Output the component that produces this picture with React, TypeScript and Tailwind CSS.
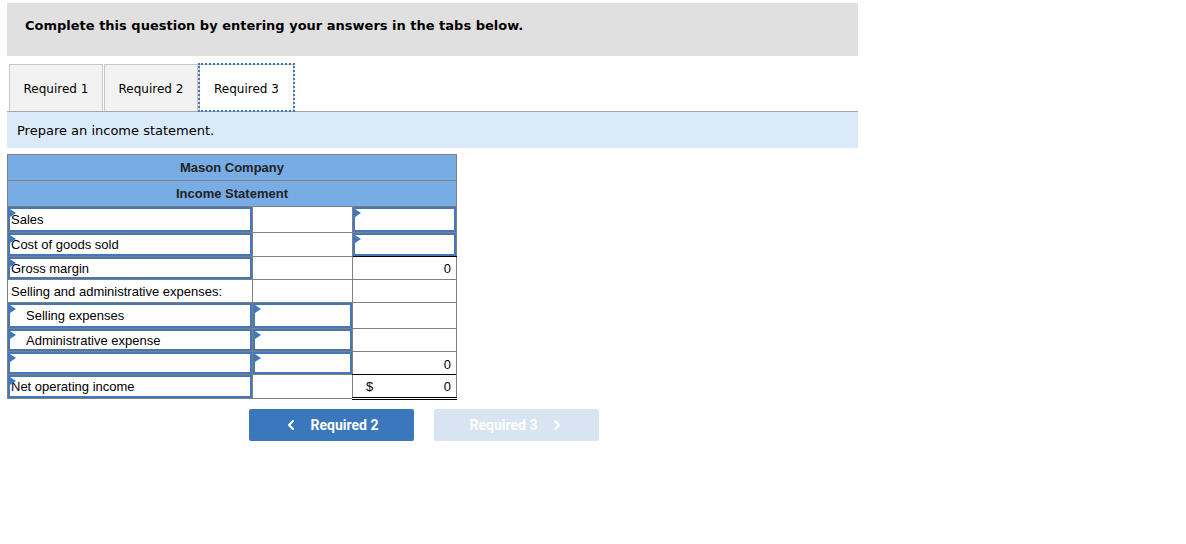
import { ChevronLeft, ChevronRight } from "lucide-react";

const verdana = { fontFamily: '"DejaVu Sans", Verdana, sans-serif' };

function Marker() {
  return (
    <span className="absolute left-0 top-0 h-0 w-0 border-y-[4px] border-l-[6px] border-y-transparent border-l-[#3d78c0]" />
  );
}

function Input({ text = "", indent = false }: { text?: string; indent?: boolean }) {
  return (
    <div className="relative h-full border-2 border-[#4478b8] bg-white flex items-center">
      <Marker />
      <span className={indent ? "pl-[16px]" : "pl-[1px]"}>{text}</span>
    </div>
  );
}

export default function App() {
  const tabs = ["Required 1", "Required 2", "Required 3"];

  return (
    <div className="w-[1186px] h-[544px] bg-white pt-[3px] pl-[7px]">
      {/* instructions */}
      <div className="w-[851px] h-[53px] bg-[#e0e0e0] pt-[10px] pl-[18px]" style={verdana}>
        <span className="text-[13px] font-bold text-black">Complete this question by entering your answers in the tabs below.</span>
      </div>

      {/* tabs */}
      <div className="mt-[8px] w-[851px] flex items-end border-b border-[#a6a6a6] pl-[2px] h-[48px]" style={verdana}>
        {tabs.map((t, i) =>
          i === 2 ? (
            <div key={t} className="outline-2 outline-dotted outline-[#3d78c0] -outline-offset-1 h-[47px] w-[95px] border border-b-0 border-[#c8c8c8] bg-white flex items-center justify-center pt-[2px] text-[12px] text-black">
              {t}
            </div>
          ) : (
            <div key={t} className="mr-[1px] h-[47px] w-[94px] border border-b-0 border-[#c8c8c8] bg-[#f2f2f2] flex items-center justify-center pt-[2px] text-[12px] text-black">
              {t}
            </div>
          )
        )}
      </div>
      <div className="w-[851px] h-[36px] bg-[#dbeaf8] flex items-center pl-[10px] pt-[2px] text-[13px] text-black" style={verdana}>
        Prepare an income statement.
      </div>

      {/* statement */}
      <table
        className="mt-[6px] table-fixed border-collapse border border-[#808080] text-[13px] leading-[15px] text-black"
        style={{ fontFamily: '"Liberation Sans", Arial, sans-serif' }}
      >
        <colgroup>
          <col className="w-[245px]" />
          <col className="w-[100px]" />
          <col className="w-[104px]" />
        </colgroup>
        <tbody>
          <tr className="h-[26px] bg-[#78ace4]">
            <td colSpan={3} className="border border-[#808080] text-center font-bold text-[13px] text-[#222]">Mason Company</td>
          </tr>
          <tr className="h-[26px] bg-[#78ace4]">
            <td colSpan={3} className="border border-[#808080] text-center font-bold text-[13px] text-[#222]">Income Statement</td>
          </tr>
          <tr className="h-[26px]">
            <td className="border border-[#808080] p-0 h-[26px]"><Input text="Sales" /></td>
            <td className="border border-[#808080] p-0" />
            <td className="border border-[#808080] p-0 h-[26px]"><Input /></td>
          </tr>
          <tr className="h-[24px]">
            <td className="border border-[#808080] p-0 h-[24px]"><Input text="Cost of goods sold" /></td>
            <td className="border border-[#808080] p-0" />
            <td className="border border-[#808080] border-b-black p-0 h-[24px]"><Input /></td>
          </tr>
          <tr className="h-[23px]">
            <td className="border border-[#808080] p-0 h-[23px]"><Input text="Gross margin" /></td>
            <td className="border border-[#808080] p-0" />
            <td className="border border-[#808080] border-t-black p-0 pr-[5px] text-right">0</td>
          </tr>
          <tr className="h-[23px]">
            <td className="border border-[#808080] p-0 pl-[3px]">Selling and administrative expenses:</td>
            <td className="border border-[#808080] p-0" />
            <td className="border border-[#808080] p-0" />
          </tr>
          <tr className="h-[26px]">
            <td className="border border-[#808080] p-0 h-[26px]"><Input text="Selling expenses" indent /></td>
            <td className="border border-[#808080] p-0 h-[26px]"><Input /></td>
            <td className="border border-[#808080] p-0" />
          </tr>
          <tr className="h-[23px]">
            <td className="border border-[#808080] p-0 h-[23px]"><Input text="Administrative expense" indent /></td>
            <td className="border border-[#808080] p-0 h-[23px]"><Input /></td>
            <td className="border border-[#808080] p-0" />
          </tr>
          <tr className="h-[23px]">
            <td className="border border-[#808080] p-0 h-[23px]"><Input /></td>
            <td className="border border-[#808080] p-0 h-[23px]"><Input /></td>
            <td className="border border-[#808080] border-b-black p-0 pr-[5px] pb-[2px] text-right align-bottom">0</td>
          </tr>
          <tr className="h-[24px]">
            <td className="border border-[#808080] p-0 h-[24px]"><Input text="Net operating income" /></td>
            <td className="border border-[#808080] p-0" />
            <td className="border border-[#808080] border-t-black border-b-[3px] border-b-black border-double p-0 pr-[5px]">
              <div className="flex justify-between pl-[13px]">
                <span>$</span>
                <span>0</span>
              </div>
            </td>
          </tr>
        </tbody>
      </table>

      {/* navigation */}
      <div className="mt-[9px] ml-[242px] flex gap-[20px]" style={{ fontFamily: "Roboto, sans-serif" }}>
        <button className="w-[165px] h-[32px] rounded-[2px] bg-[#3a77bd] text-white font-bold text-[14px] flex items-center justify-center gap-[12px] pr-[2px]">
          <ChevronLeft size={16} strokeWidth={3} />
          Required 2
        </button>
        <button className="w-[165px] h-[32px] rounded-[2px] bg-[#d8e4f1] text-white font-bold text-[14px] flex items-center justify-center gap-[12px] pl-[2px]">
          Required 3
          <ChevronRight size={16} strokeWidth={3} />
        </button>
      </div>
    </div>
  );
}
